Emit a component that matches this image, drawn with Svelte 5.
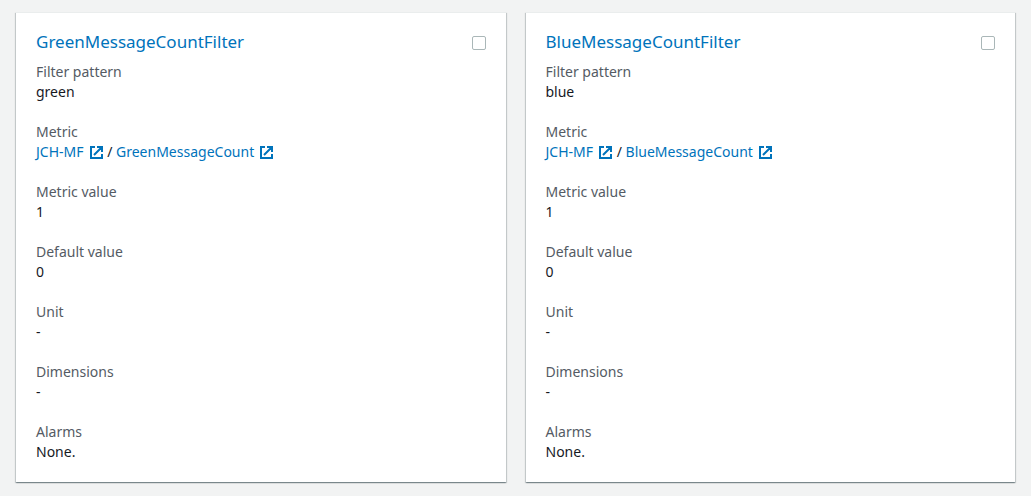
<script>
  const filters = [
    { name: 'GreenMessageCountFilter', pattern: 'green', metric: 'GreenMessageCount' },
    { name: 'BlueMessageCountFilter', pattern: 'blue', metric: 'BlueMessageCount' }
  ];
  const rest = [
    ['Metric value', '1'],
    ['Default value', '0'],
    ['Unit', '-'],
    ['Dimensions', '-'],
    ['Alarms', 'None.']
  ];
</script>

{#snippet external(text)}
  <a href="#metric">{text}<svg viewBox="0 0 13 13" aria-hidden="true"><path d="M5 1H1v11h11V8M7 1h5v5M4 9l7-7" /></svg></a>
{/snippet}

<main>
  {#each filters as filter}
    <article>
      <header>
        <h2><a href="#filter">{filter.name}</a></h2>
        <input type="checkbox" aria-label={filter.name} />
      </header>
      <dl>
        <div><dt>Filter pattern</dt><dd>{filter.pattern}</dd></div>
        <div><dt>Metric</dt><dd>{@render external('JCH-MF')} / {@render external(filter.metric)}</dd></div>
        {#each rest as [label, value]}
          <div><dt>{label}</dt><dd>{value}</dd></div>
        {/each}
      </dl>
    </article>
  {/each}
</main>

<style>
  :global(body) { margin: 0; background: #f2f3f3; }
  main {
    display: grid;
    grid-template-columns: 1fr 1fr;
    gap: 20px;
    padding: 12px 16px 14px;
    font: 14px/20px "Noto Sans", sans-serif;
    color: #16191f;
  }
  article {
    background: #fff;
    padding: 18px 20px 20px;
    box-shadow: 0 1px 1px rgba(0, 28, 36, 0.3), 1px 1px 1px rgba(0, 28, 36, 0.15), -1px 1px 1px rgba(0, 28, 36, 0.15);
    border-top: 1px solid #eaeded;
    box-sizing: border-box;
  }
  header { display: flex; justify-content: space-between; align-items: flex-start; margin-bottom: 9px; }
  h2 { margin: 0; font-size: 17px; line-height: 22px; font-weight: 400; }
  a { color: #0073bb; text-decoration: none; }
  input { appearance: none; width: 14px; height: 14px; margin: 5px 0 0; border: 1px solid #aab7b8; border-radius: 2px; background: #fff; }
  dl { margin: 0; display: grid; gap: 20px; }
  dt { color: #545b64; }
  dd { margin: 0; }
  svg { width: 13px; height: 13px; margin: 0 1px 0 6px; vertical-align: -2px; fill: none; stroke: currentColor; stroke-width: 2; }
</style>
